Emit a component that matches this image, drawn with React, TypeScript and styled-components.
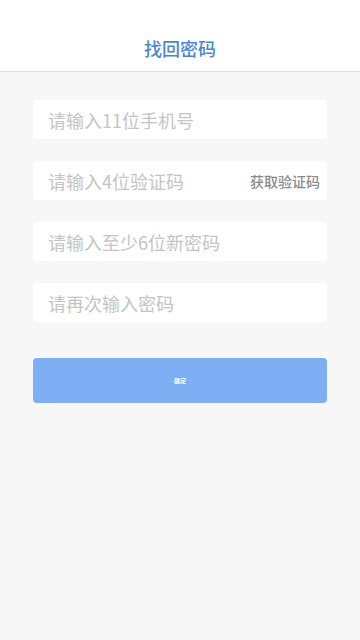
import React, { useState } from "react";
import styled, { createGlobalStyle } from "styled-components";

const GlobalStyle = createGlobalStyle`
	html, body {
		margin: 0;
		padding: 0;
		background: #f7f7f7;
		font-family: "Noto Sans CJK SC", "Noto Sans", sans-serif;
	}
	#root {
		min-height: 640px;
	}
`;

const Page = styled.div`
	min-height: 640px;
	background: #f7f7f7;
`;

const Header = styled.header`
	height: 72px;
	padding-top: 24px;
	box-sizing: border-box;
	background: #ffffff;
	border-bottom: 1px solid #dddddd;
	display: flex;
	justify-content: center;
	align-items: center;
`;

const Title = styled.h1`
	margin: 0;
	font-size: 18px;
	font-weight: 500;
	color: #4a86d6;
	line-height: 1;
`;

const Form = styled.form`
	display: flex;
	flex-direction: column;
	gap: 22px;
	padding: 28px 33px 0 33px;
`;

const Field = styled.div`
	height: 39px;
	background: #ffffff;
	border-radius: 4px;
	display: flex;
	align-items: center;
	padding: 0 7px 0 15px;
`;

const Input = styled.input`
	flex: 1;
	min-width: 0;
	border: none;
	outline: none;
	background: transparent;
	font-family: inherit;
	font-size: 18px;
	color: #333;
	padding: 0;
	&::placeholder {
		color: #c4c4c4;
	}
`;

const CodeButton = styled.button`
	border: none;
	background: transparent;
	padding: 0;
	font-family: inherit;
	font-size: 14px;
	font-weight: 500;
	color: #8a8a8a;
`;

const Submit = styled.button`
	margin-top: 14px;
	height: 45px;
	border: none;
	border-radius: 4px;
	background: #7eaef3;
	color: #ffffff;
	font-family: inherit;
	font-size: 6px;
	font-weight: 700;
`;

function App() {
	const [phone, setPhone] = useState("");
	const [code, setCode] = useState("");
	const [pwd, setPwd] = useState("");
	const [pwd2, setPwd2] = useState("");

	return (
		<Page>
			<GlobalStyle />
			<Header>
				<Title>找回密码</Title>
			</Header>
			<Form onSubmit={(e) => e.preventDefault()}>
				<Field>
					<Input
						placeholder="请输入11位手机号"
						value={phone}
						onChange={(e) => setPhone(e.target.value)}
					/>
				</Field>
				<Field>
					<Input
						placeholder="请输入4位验证码"
						value={code}
						onChange={(e) => setCode(e.target.value)}
					/>
					<CodeButton type="button">获取验证码</CodeButton>
				</Field>
				<Field>
					<Input
						type="password"
						placeholder="请输入至少6位新密码"
						value={pwd}
						onChange={(e) => setPwd(e.target.value)}
					/>
				</Field>
				<Field>
					<Input
						type="password"
						placeholder="请再次输入密码"
						value={pwd2}
						onChange={(e) => setPwd2(e.target.value)}
					/>
				</Field>
				<Submit type="submit">确定</Submit>
			</Form>
		</Page>
	);
}

export default App;
